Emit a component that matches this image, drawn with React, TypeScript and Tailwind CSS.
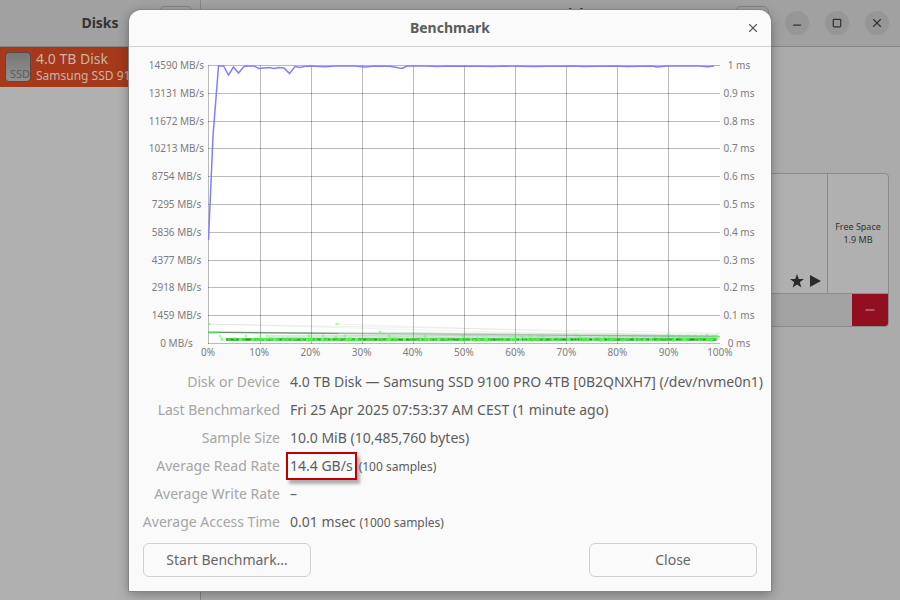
import React from "react";
import { Minus, Square, X } from "lucide-react";

const speeds = [14590, 13131, 11672, 10213, 8754, 7295, 5836, 4377, 2918, 1459, 0];
const times = ["1", "0.9", "0.8", "0.7", "0.6", "0.5", "0.4", "0.3", "0.2", "0.1", "0"];
const percents = [0, 10, 20, 30, 40, 50, 60, 70, 80, 90, 100];

const readRate =
  "0.5,175 5,71 10.5,1 15.5,1 20.5,10 25.5,2 30.5,8 36,1.5 41,1 46,1 51,3.5 56,3 61,2.5 66,3.5 71,2.5 76,3 81.5,8.5 87,1.5 92,2.5 97,1.2 102,1 117,1.8 127,1 147,1 157,2 167,1 182,1.2 194,3.5 199,1 219,1 229,1.6 239,1 275,1.2 285,1.6 295,1 325,1.6 340,1.2 365,1 375,1.4 405,1 420,1.4 444,1 449,2 459,1 490,1 500,1.8 506,1";

const pseudo = (i: number, salt: number) => {
  const v = Math.sin(i * 12.9898 + salt * 78.233) * 43758.5453;
  return v - Math.floor(v);
};

const samples = Array.from({ length: 620 }, (_, i) => ({
  x: 12 + pseudo(i, 1) * 498,
  y: 273.5 + pseudo(i, 2) * 2,
}));

const outliers = [
  [1, 259], [129, 259], [172, 267], [12, 271], [38, 271], [52, 271], [59, 271], [101, 271],
  [115, 271], [128, 272], [137, 271], [181, 271], [217, 271], [255, 271], [307, 271], [314, 272],
  [322, 271], [334, 271], [368, 270], [372, 272], [396, 271], [401, 271], [425, 271], [447, 272],
  [454, 271], [460, 270], [465, 271], [472, 271], [480, 271], [487, 271], [494, 271], [499, 270],
  [505, 271], [508, 271],
];

const trails = [
  [0, 259, 512, 273], [129, 259, 512, 272], [0, 267, 512, 271], [0, 267, 512, 270],
  [0, 267, 512, 272], [8, 267, 400, 273], [8, 267, 512, 274], [0, 267, 512, 269],
  [4, 267, 300, 274], [172, 267, 512, 273], [0, 259, 512, 268], [0, 267, 512, 271],
];

function Plot() {
  return (
    <svg
      role="img"
      aria-label="Read rate and access time"
      viewBox="0 0 512 279"
      preserveAspectRatio="none"
      className="block h-[279px] w-full bg-white"
    >
      <g stroke="#000" strokeOpacity=".27" shapeRendering="crispEdges">
        {percents.map((p) => (
          <line key={p} x1={Math.ceil(p * 5.11) + 0.5} x2={Math.ceil(p * 5.11) + 0.5} y1="0" y2="279" />
        ))}
        {speeds.map((s, i) => (
          <line key={s} x1="0" x2="512" y1={Math.round(i * 27.8) + 0.5} y2={Math.round(i * 27.8) + 0.5} />
        ))}
      </g>
      <g stroke="#0a4a1a" strokeOpacity=".07">
        {trails.map(([x1, y1, x2, y2], i) => (
          <line key={i} x1={x1} y1={y1} x2={x2} y2={y2} />
        ))}
      </g>
      <line x1="0" y1="267.5" x2="512" y2="271.5" stroke="#1c5c2c" strokeOpacity=".25" />
      <line x1="0" y1="267.5" x2="130" y2="268.5" stroke="#1c5c2c" strokeOpacity=".35" />
      <rect x="60" y="270" width="450" height="3" fill="#5a8f66" fillOpacity=".22" />
      <rect x="18" y="273" width="491" height="3" fill="#4de64d" fillOpacity=".8" />
      <line x1="18" y1="274.5" x2="508" y2="274.5" stroke="#1d6420" strokeWidth="2" strokeOpacity=".75" strokeDasharray="13 3 22 2 7 3 30 2" />
      <g fill="#4dff4d" fillOpacity=".5">
        {samples.map((s, i) => (
          <circle key={i} cx={s.x} cy={s.y} r={i % 3 ? 0.8 : 1.5} />
        ))}
        {outliers.map(([x, y], i) => (
          <circle key={i} cx={x} cy={y} r="1.6" />
        ))}
        {[1, 3, 5, 7, 9].map((x) => (
          <circle key={x} cx={x} cy="267.5" r="1.6" />
        ))}
      </g>
      <polyline points={readRate} fill="none" stroke="#8080ff" strokeWidth="1.5" />
    </svg>
  );
}

function Detail({ label, children }: { label: string; children: React.ReactNode }) {
  return (
    <>
      <dt className="flex justify-end whitespace-nowrap text-[#a5a5a5]">{label}</dt>
      <dd className="whitespace-nowrap text-[#5c5c5c]">{children}</dd>
    </>
  );
}

function Window() {
  const control = "flex size-6 items-center justify-center rounded-full bg-[#969696]";
  const tool = "h-[34px] w-[34px] rounded-md border border-[#858585]";
  return (
    <div className="flex h-screen text-[#333]">
      <aside className="w-[201px] shrink-0 border-r border-[#858585] bg-[#b0b0b0]">
        <header className="grid h-[47px] grid-cols-[34px_1fr_34px] items-center border-b border-[#858585] bg-[#a1a1a1] px-[7px]">
          <h1 className="col-start-2 text-center text-sm font-bold">Disks</h1>
          <button type="button" aria-label="Menu" className={tool} />
        </header>
        <button type="button" className="flex h-10 w-full items-center gap-[5px] overflow-hidden bg-[#a5391a] pl-[5px] text-left whitespace-nowrap text-[#c9b4ac]">
          <span className="flex h-[30px] w-[26px] shrink-0 items-end justify-end rounded-[4px] border border-[#5b4a44] bg-linear-to-b from-[#777] to-[#929292] text-[11px] leading-[14px] text-[#5c5c5c]">
            SSD
          </span>
          <span>
            <span className="block text-sm leading-[18px]">4.0 TB Disk</span>
            <span className="block text-xs leading-4">Samsung SSD 9100</span>
          </span>
        </button>
      </aside>
      <main className="flex-1 bg-[#ababab]">
        <header className="grid h-[47px] grid-cols-[1fr_auto_1fr] border-b border-[#858585] bg-[#a1a1a1] pr-[11px] pl-[11px]">
          <h2 className="col-start-2 pt-[5px] text-sm leading-[18px] font-bold">4.0 TB Disk</h2>
          <div className="flex items-center justify-end gap-4">
            <button type="button" aria-label="Drive options" className={tool} />
            <button type="button" aria-label="Minimize" className={control}><Minus className="mt-1 size-3" strokeWidth={2.5} /></button>
            <button type="button" aria-label="Maximize" className={control}><Square className="size-2.5" strokeWidth={3} /></button>
            <button type="button" aria-label="Close window" className={control}><X className="size-3.5" /></button>
          </div>
        </header>
        <section className="mt-[126px] mr-[11px] ml-3 overflow-hidden rounded-[4px] border border-[#8b8b8b] bg-[#b0b0b0]">
          <div className="flex h-[119px]">
            <div className="flex flex-1 items-end justify-end gap-1 border-r border-[#8b8b8b] px-[5px] pb-[5px] text-[#2b2b2b]">
              <svg viewBox="0 0 14 14" className="size-3.5" fill="currentColor">
                <path d="M7 0l1.8 5H14l-4.2 3.2L11.400 13.500 7 10.400 2.600 13.500 4.200 8.200 0 5h5.200z" />
              </svg>
              <svg viewBox="0 0 14 14" className="size-3.5" fill="currentColor">
                <path d="M2 1l11 6-11 6z" />
              </svg>
            </div>
            <div className="flex w-[60px] flex-col items-center justify-center pb-0.5 text-[9px] leading-[13px]">
              <span>Free Space</span>
              <span>1.9 MB</span>
            </div>
          </div>
          <div className="flex h-[33px] justify-end border-t border-[#8b8b8b] bg-[#a3a3a3]">
            <button type="button" aria-label="Delete partition" className="flex w-9 items-center justify-center bg-[#920f20] text-[#d5b5b9]">
              <Minus className="size-3.5" strokeWidth={1.5} />
            </button>
          </div>
        </section>
      </main>
    </div>
  );
}

export default function App() {
  const action = "h-[34px] w-[168px] rounded-md border border-[#cfcfcf] text-sm text-[#666]";
  return (
    <div className="relative h-screen overflow-hidden font-['Noto_Sans',sans-serif]">
      <Window />
      <div className="absolute inset-0 flex items-start justify-center pt-2.5">
        <div role="dialog" aria-labelledby="title" className="w-full max-w-[642px] rounded-t-xl bg-[#fafafa] shadow-[0_0_0_1px_#858585,0_3px_12px_rgba(0,0,0,0.35)]">
          <header className="grid h-[37px] grid-cols-[36px_1fr_36px] items-center border-b border-[#cfcfcf] text-[#5c5c5c]">
            <h2 id="title" className="col-start-2 text-center text-sm font-bold">Benchmark</h2>
            <button type="button" aria-label="Close dialog" className="flex h-9 items-center justify-center"><X className="size-3.5" /></button>
          </header>
          <div className="flex pt-[11px] pr-[13px] pl-4 text-[10px] leading-[14px] text-[#7c7c7c]">
            <div className="flex h-[292px] w-[63px] flex-col justify-between text-center">
              {speeds.map((s) => <span key={s}>{s} MB/s</span>)}
            </div>
            <div className="flex-1 pt-[7px]">
              <Plot />
              <div className="-mx-5 flex justify-between pt-px text-center">
                {percents.map((p) => <span key={p} className="w-10">{p}%</span>)}
              </div>
            </div>
            <div className="flex h-[292px] w-[38px] flex-col justify-between text-center whitespace-nowrap">
              {times.map((t) => <span key={t}>{t} ms</span>)}
            </div>
          </div>
          <dl className="mt-[9px] grid grid-cols-[137px_1fr] gap-x-2.5 px-3.5 text-sm leading-7">
            <Detail label="Disk or Device">4.0 TB Disk — Samsung SSD 9100 PRO 4TB [0B2QNXH7] (/dev/nvme0n1)</Detail>
            <Detail label="Last Benchmarked">Fri 25 Apr 2025 07:53:37 AM CEST (1 minute ago)</Detail>
            <Detail label="Sample Size">10.0 MiB (10,485,760 bytes)</Detail>
            <Detail label="Average Read Rate">
              <span className="-ml-1 inline-block border-2 border-[#c00000] px-0.5 leading-6 shadow-[3px_4px_3px_rgba(0,0,0,0.3)]">14.4 GB/s</span>
              <span className="ml-0.5 text-xs">(100 samples)</span>
            </Detail>
            <Detail label="Average Write Rate">–</Detail>
            <Detail label="Average Access Time">0.01 msec <span className="text-xs">(1000 samples)</span></Detail>
          </dl>
          <footer className="flex justify-between px-3.5 pt-[7px] pb-3.5">
            <button type="button" className={action}>Start Benchmark…</button>
            <button type="button" className={action}>Close</button>
          </footer>
        </div>
      </div>
    </div>
  );
}
